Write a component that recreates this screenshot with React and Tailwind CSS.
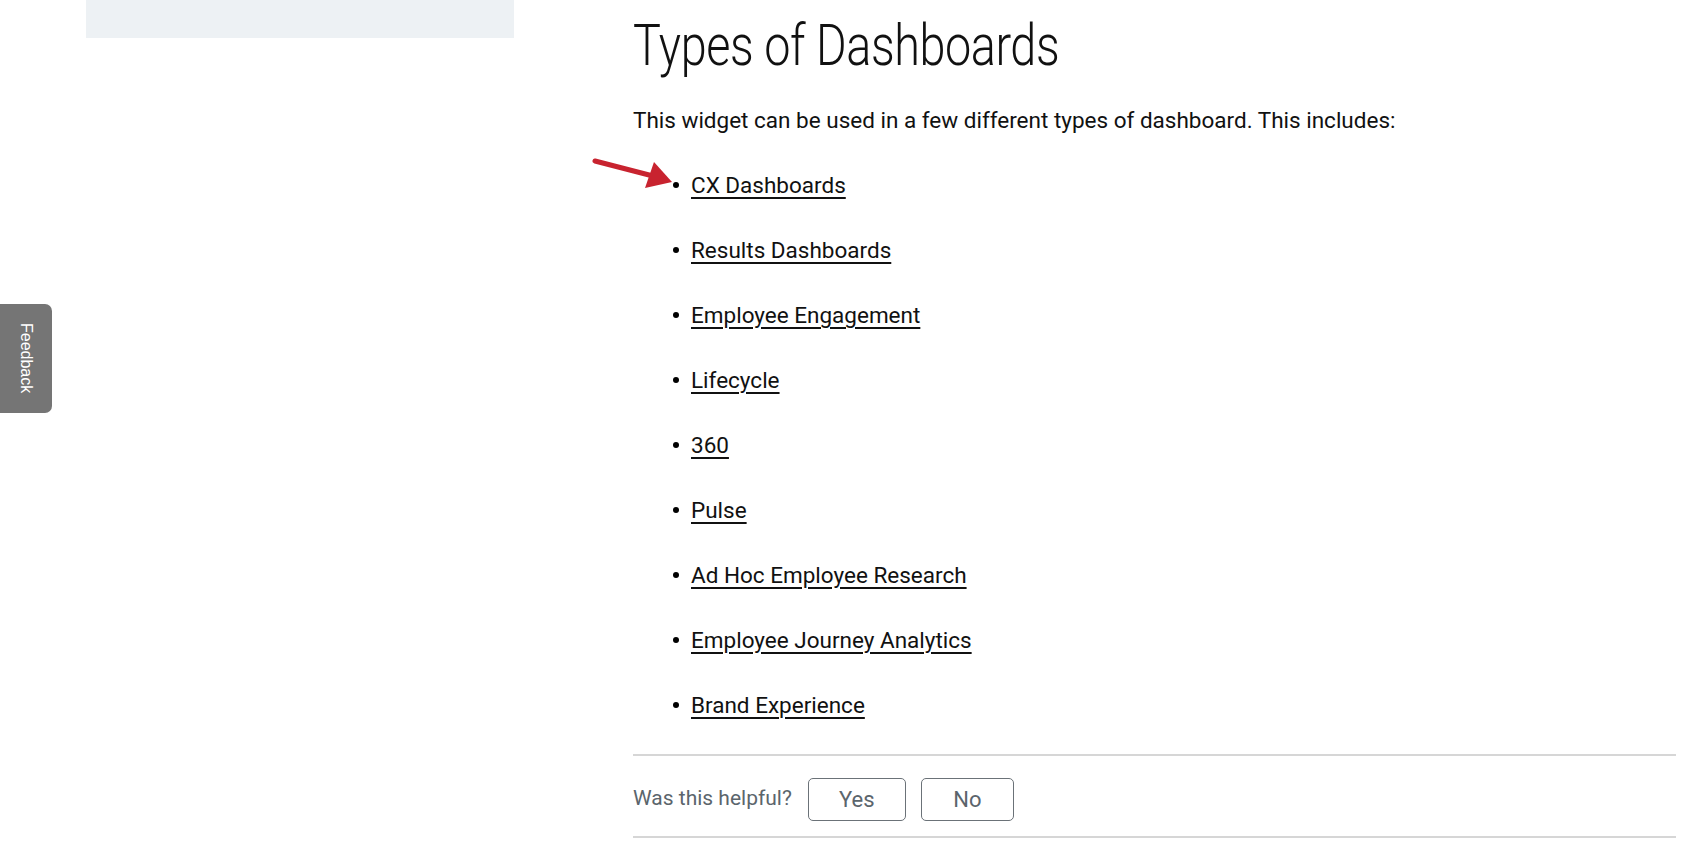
import React from "react";

const items = [
  "CX Dashboards",
  "Results Dashboards",
  "Employee Engagement",
  "Lifecycle",
  "360",
  "Pulse",
  "Ad Hoc Employee Research",
  "Employee Journey Analytics",
  "Brand Experience",
];

export default function App() {
  return (
    <div className="relative min-h-[850px] w-full bg-white font-['Roboto',sans-serif] text-[#111]">
      <div className="flex pl-[86px]">
        <aside className="w-[428px] shrink-0">
          <div className="h-[38px] bg-[#edf1f4]" />
        </aside>
        <main className="ml-[119px] w-[1043px] shrink-0">
          <h1 className="mt-[17px] h-[57px] origin-left scale-x-[0.82] whitespace-nowrap text-[57px] font-light leading-none tracking-[-0.5px] text-[#111]">
            Types of Dashboards
          </h1>
          <p className="mt-[30.5px] h-[30px] whitespace-nowrap text-[22.5px] leading-[30px]">
            This widget can be used in a few different types of dashboard. This includes:
          </p>
          <ul className="mt-[35px] flex flex-col gap-[35px]">
            {items.map((t) => (
              <li key={t} className="flex h-[30px] items-center pl-[40px]">
                <span className="mr-[12px] h-[6px] w-[6px] shrink-0 rounded-full bg-black" />
                <a
                  href="#"
                  className="whitespace-nowrap text-[22.5px] leading-[30px] text-[#111] underline decoration-2 underline-offset-[4px]"
                >
                  {t}
                </a>
              </li>
            ))}
          </ul>
          <div className="mt-[34px] border-t-2 border-[#d6d6d6]" />
          <div className="mt-[22px] flex h-[43px] items-center">
            <span className="mr-[16px] whitespace-nowrap text-[21px] text-[#5b656c]">
              Was this helpful?
            </span>
            <button className="mr-[15px] h-[43px] w-[98px] rounded-[5px] border border-[#6b7278] bg-white text-[22px] text-[#5b656c]">
              Yes
            </button>
            <button className="h-[43px] w-[93px] rounded-[5px] border border-[#6b7278] bg-white text-[22px] text-[#5b656c]">
              No
            </button>
          </div>
          <div className="mt-[15px] border-t-2 border-[#d6d6d6]" />
        </main>
      </div>

      <svg
        className="absolute left-[587px] top-[151px]"
        width="95"
        height="45"
        viewBox="0 0 95 45"
      >
        <line x1="8" y1="10" x2="66" y2="25" stroke="#c8232f" strokeWidth="5" strokeLinecap="round" />
        <polygon points="85,31 67,11 58,37" fill="#c8232f" />
      </svg>

      <div className="absolute left-0 top-[304px] flex h-[109px] w-[52px] items-center justify-center rounded-r-[7px] bg-[#757575]">
        <span className="font-['Liberation_Sans',Arial,sans-serif] text-[16px] text-white [writing-mode:vertical-rl]">
          Feedback
        </span>
      </div>
    </div>
  );
}
